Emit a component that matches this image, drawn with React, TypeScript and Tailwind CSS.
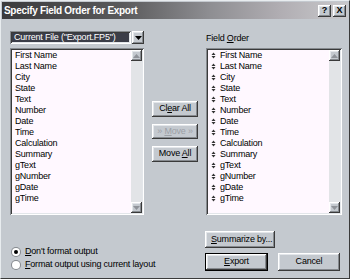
import React from 'react';

const FIELDS = [
  'First Name',
  'Last Name',
  'City',
  'State',
  'Text',
  'Number',
  'Date',
  'Time',
  'Calculation',
  'Summary',
  'gText',
  'gNumber',
  'gDate',
  'gTime',
];

const raised =
  'shadow-[inset_-1px_-1px_#3a3a3a,inset_1px_1px_#ffffff,inset_-2px_-2px_#868a8f,inset_2px_2px_#e3e6ea]';
const sunken =
  'shadow-[inset_1px_1px_#868a8f,inset_-1px_-1px_#ffffff,inset_2px_2px_#3a3a3a,inset_-2px_-2px_#e3e6ea]';

function Arrow({ down, color = '#8f9399' }: { down?: boolean; color?: string }) {
  return (
    <svg width="7" height="4" viewBox="0 0 7 4">
      {down ? <path d="M0 0h7L3.5 4z" fill={color} /> : <path d="M0 4h7L3.5 0z" fill={color} />}
    </svg>
  );
}

function ScrollBar() {
  return (
    <div className="w-[11px] flex flex-col bg-[#e2e4e7]">
      <div className={`h-[11px] bg-[#c4c9cf] flex items-center justify-center ${raised}`}>
        <Arrow />
      </div>
      <div className="flex-1" />
      <div className={`h-[11px] bg-[#c4c9cf] flex items-center justify-center ${raised}`}>
        <Arrow down />
      </div>
    </div>
  );
}

// little up/down drag handle in front of each field
function Handle() {
  return (
    <svg width="5" height="7" viewBox="0 0 5 7" className="shrink-0">
      <path d="M0.5 3h4L2.5 0.5z" fill="#333" />
      <path d="M0.5 4h4L2.5 6.5z" fill="#333" />
    </svg>
  );
}

function Button({ children, disabled, className = '' }: { children: React.ReactNode; disabled?: boolean; className?: string }) {
  return (
    <div
      className={`bg-[#c4c9cf] flex items-center justify-center text-[9px] tracking-[-0.2px] ${raised} ${disabled ? 'text-[#9ca0a6]' : 'text-black'} ${className}`}
    >
      {children}
    </div>
  );
}

function Radio({ checked, children }: { checked?: boolean; children: React.ReactNode }) {
  return (
    <div className="flex items-center gap-[4px] h-[13px]">
      <div className="w-[10px] h-[10px] rounded-full bg-[#868a8f] p-[1px]">
        <div className="w-full h-full rounded-full bg-white flex items-center justify-center">
          {checked && <div className="w-[4px] h-[4px] rounded-full bg-black" />}
        </div>
      </div>
      <span className="text-[9px] tracking-[-0.2px]">{children}</span>
    </div>
  );
}

export default function App() {
  return (
    <div className="w-[350px] h-[279px] bg-[#c4c9cf] flex flex-col font-['Liberation_Sans',Arial,sans-serif] text-black border border-t-[#e8ecef] border-l-[#e8ecef] border-r-[#3a3a3a] border-b-[#3a3a3a] overflow-hidden">
      {/* Title bar */}
      <div className="h-[17px] mx-[1px] mt-[1px] flex items-center justify-between pl-[2px] pr-[2px] bg-[linear-gradient(90deg,#3b3b3d_0%,#5a5a5c_35%,#8e8e92_60%,#b0adb2_80%,#c9c9cc_100%)]">
        <span className="text-white font-bold text-[10px] tracking-[-0.3px]">Specify Field Order for Export</span>
        <div className="flex gap-[2px]">
          <div className={`w-[13px] h-[12px] bg-[#c4c9cf] flex items-center justify-center text-[9px] font-bold leading-none ${raised}`}>?</div>
          <div className={`w-[13px] h-[12px] bg-[#c4c9cf] flex items-center justify-center text-[9px] font-bold leading-none ${raised}`}>X</div>
        </div>
      </div>

      <div className="flex pl-[9px] pt-[12px]">
        {/* Left column */}
        <div className="w-[134px] flex flex-col">
          <div className="h-[13px] flex gap-[1px]">
            <div className={`flex-1 bg-[#3b3d48] ${sunken} p-[2px] flex items-center`}>
              <span className="text-white text-[9px] tracking-[-0.2px] pl-[2px] leading-none">Current File ("Export.FP5")</span>
            </div>
            <div className={`w-[12px] bg-[#c4c9cf] flex items-center justify-center ${raised}`}>
              <Arrow down color="#000" />
            </div>
          </div>
          <div className={`mt-[4px] h-[167px] bg-[#fff8ff] ${sunken} p-[2px] flex`}>
            <div className="flex-1 pl-[3px] flex flex-col">
              {FIELDS.map((f) => (
                <div key={f} className="h-[11px] leading-[11px] text-[9px] tracking-[-0.2px]">
                  {f}
                </div>
              ))}
            </div>
            <ScrollBar />
          </div>
        </div>

        {/* Middle buttons */}
        <div className="w-[62px] flex flex-col items-center pt-[70px] gap-[7px]">
          <Button className="w-[46px] h-[16px]">
            <span>
              Cl<u>e</u>ar All
            </span>
          </Button>
          <Button disabled className="w-[46px] h-[15px]">
            <span>
              » <u>M</u>ove »
            </span>
          </Button>
          <Button className="w-[46px] h-[16px]">
            <span>
              Move <u>A</u>ll
            </span>
          </Button>
        </div>

        {/* Right column */}
        <div className="w-[136px] flex flex-col">
          <div className="h-[13px] text-[9px] tracking-[-0.2px] leading-[13px] pt-[1px]">
            Field <u>O</u>rder
          </div>
          <div className={`mt-[4px] h-[167px] bg-[#fff8ff] ${sunken} p-[2px] flex`}>
            <div className="flex-1 pl-[3px] flex flex-col">
              {FIELDS.map((f) => (
                <div key={f} className="h-[11px] flex items-center gap-[4px] text-[9px] tracking-[-0.2px]">
                  <Handle />
                  <span className="leading-[11px]">{f}</span>
                </div>
              ))}
            </div>
            <ScrollBar />
          </div>
        </div>
      </div>

      {/* Bottom */}
      <div className="flex pl-[10px] pt-[16px]">
        <div className="w-[186px] flex flex-col pt-[14px]">
          <Radio checked>
            <u>D</u>on't format output
          </Radio>
          <Radio>
            <u>F</u>ormat output using current layout
          </Radio>
        </div>
        <div className="flex flex-col gap-[5px] ml-[8px]">
          <Button className="w-[70px] h-[17px] justify-start pl-[6px]">
            <span>
              <u>S</u>ummarize by...
            </span>
          </Button>
          <div className="flex gap-[10px]">
            <div className="border border-black">
              <Button className="w-[61px] h-[16px]">
                <span>
                  <u>E</u>xport
                </span>
              </Button>
            </div>
            <Button className="w-[62px] h-[18px]">Cancel</Button>
          </div>
        </div>
      </div>
    </div>
  );
}
